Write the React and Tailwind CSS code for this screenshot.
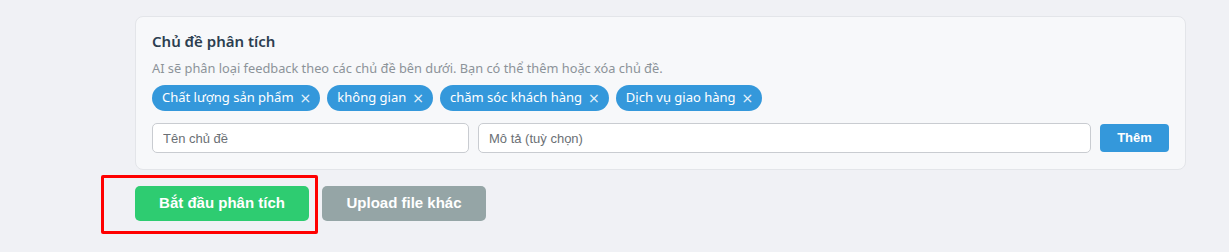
import { useState } from "react";

const initialTopics = [
  "Chất lượng sản phẩm",
  "không gian",
  "chăm sóc khách hàng",
  "Dịch vụ giao hàng",
];

const App = () => {
  const [topics, setTopics] = useState(initialTopics);
  const [name, setName] = useState("");
  const [desc, setDesc] = useState("");

  // thêm chủ đề mới
  const addTopic = () => {
    if (!name.trim()) return;
    setTopics((prev) => [...prev, name.trim()]);
    setName("");
    setDesc("");
  };

  return (
    <div className="min-h-[252px] w-full bg-[#f0f1f5] pt-4 pl-[135px] pr-[43px] font-['Liberation_Sans',Arial,sans-serif]">
      {/* ---------- Topic card ---------- */}
      <div className="rounded-lg border border-[#e3e5e9] bg-[#f7f8fa] px-4 pt-[12px] pb-[16px]">
        <h3 className="font-['Noto_Sans',sans-serif] text-[15px] leading-[24px] font-semibold text-[#2c3e50]">
          Chủ đề phân tích
        </h3>
        <p className="mt-[6px] font-['Noto_Sans',sans-serif] text-[12.8px] leading-[18px] text-[#8c9399]">
          AI sẽ phân loại feedback theo các chủ đề bên dưới. Bạn có thể thêm hoặc xóa chủ đề.
        </p>

        <div className="mt-[8px] flex flex-wrap gap-[7px]">
          {topics.map((t, i) => (
            <span
              key={i}
              className="flex h-[26px] items-center gap-[6px] rounded-full bg-[#3498db] pl-[10px] pr-[9px] font-['Noto_Sans',sans-serif] text-[13px] text-white"
            >
              {t}
              <button
                onClick={() => setTopics((prev) => prev.filter((_, j) => j !== i))}
                className="font-['DejaVu_Sans',sans-serif] text-[14px] leading-none text-white/90"
              >
                ×
              </button>
            </span>
          ))}
        </div>

        <div className="mt-3 flex items-center gap-[9px]">
          <input
            value={name}
            onChange={(e) => setName(e.target.value)}
            placeholder="Tên chủ đề"
            className="h-[30px] w-[317px] rounded-[5px] border border-[#c9ccd1] bg-white px-[10px] text-[13px] text-[#333] outline-none placeholder:text-[#6b7075]"
          />
          <input
            value={desc}
            onChange={(e) => setDesc(e.target.value)}
            placeholder="Mô tả (tuỳ chọn)"
            className="h-[30px] flex-1 rounded-[5px] border border-[#c9ccd1] bg-white px-[10px] text-[13px] text-[#333] outline-none placeholder:text-[#6b7075]"
          />
          <button
            onClick={addTopic}
            className="h-[28px] w-[69px] rounded-[4px] bg-[#3498db] text-[13px] font-bold text-white"
          >
            Thêm
          </button>
        </div>
      </div>

      {/* ---------- Actions ---------- */}
      <div className="relative mt-[16px] flex gap-[13px]">
        <button className="h-[35px] w-[174px] rounded-[5px] bg-[#2ecc71] text-[15px] font-bold text-white">
          Bắt đầu phân tích
        </button>
        <button className="h-[35px] w-[164px] rounded-[5px] bg-[#95a5a6] text-[15px] font-bold text-white">
          Upload file khác
        </button>
        {/* highlight box */}
        <div className="pointer-events-none absolute -left-[34px] -top-[11px] h-[59px] w-[217px] rounded-[2px] border-[3px] border-[#ff0000]" />
      </div>
    </div>
  );
};

export default App;
